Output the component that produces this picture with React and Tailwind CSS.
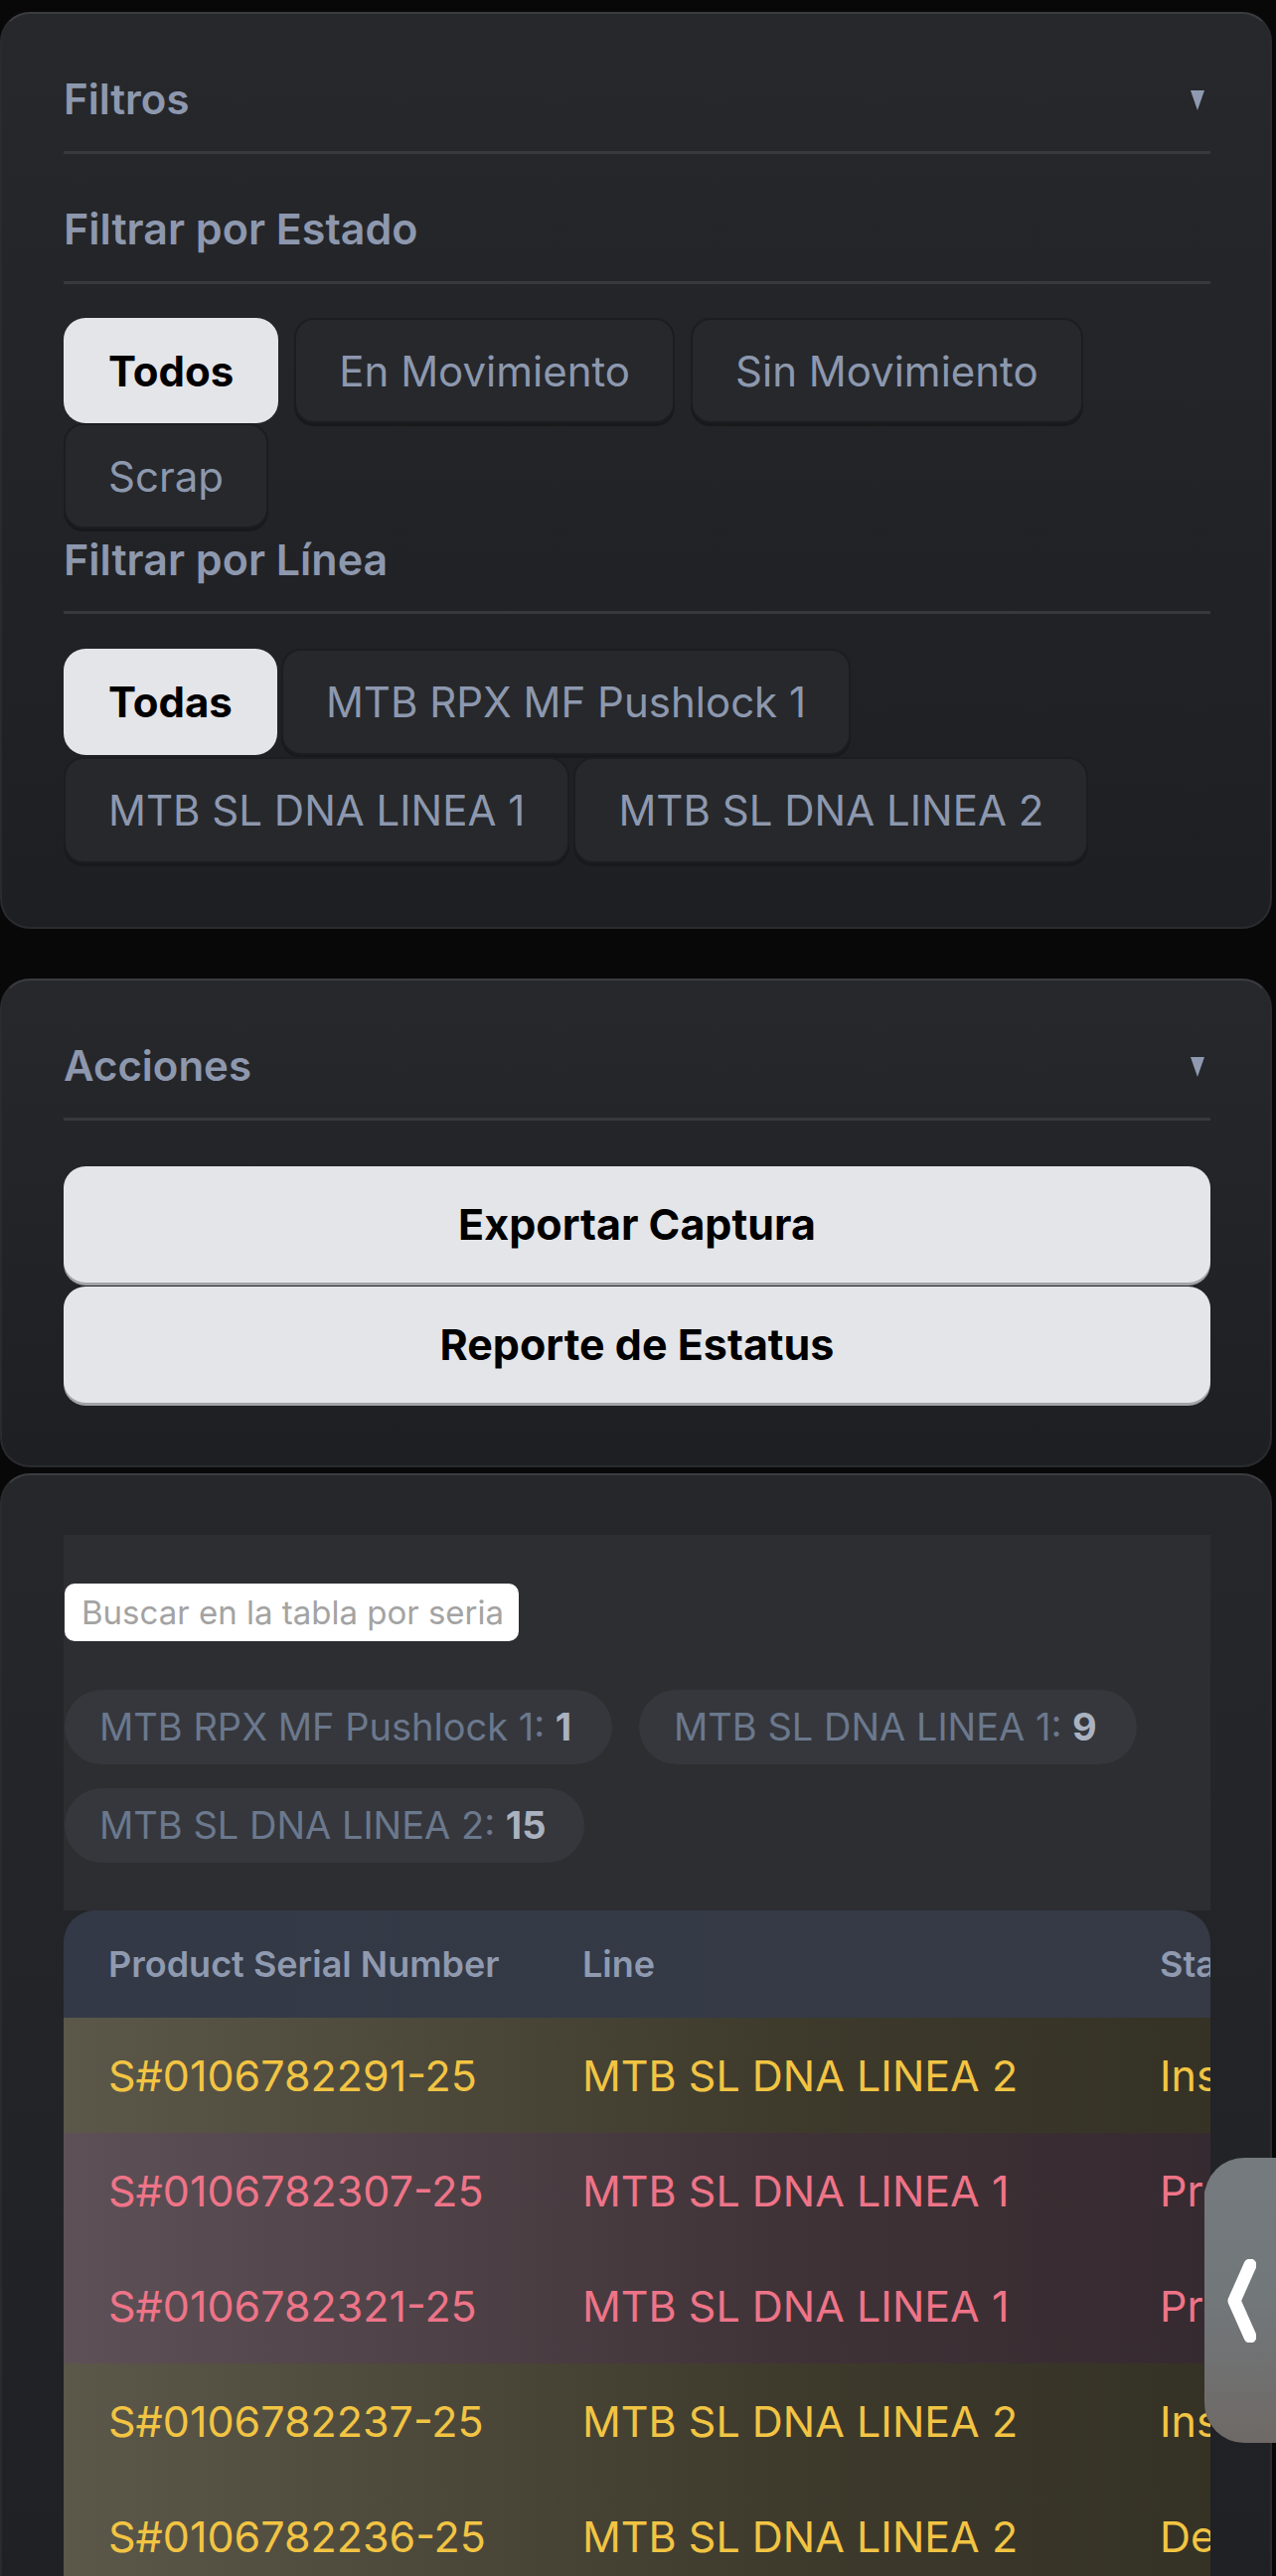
import React from "react";

const font = { fontFamily: "Inter, 'Noto Sans', sans-serif" };

function Triangle() {
  return (
    <svg width="14" height="20" viewBox="0 0 14 20">
      <polygon points="0,0 14,0 7,20" fill="#8f9ab0" />
    </svg>
  );
}

function Divider() {
  return <div className="h-[3px] bg-[#38393d]" />;
}

function Chip({ label, value, w }) {
  return (
    <div className="flex h-[75px] items-center rounded-full bg-[#35373c] px-[35px] text-[38px] text-[#6b788d]" style={{ width: w }}>
      <span className="whitespace-nowrap">
        {label}: <span className="font-bold text-[#aab2c0]">{value}</span>
      </span>
    </div>
  );
}

const rows = [
  { s: "S#0106782291-25", l: "MTB SL DNA LINEA 2", st: "Inspección", c: "y" },
  { s: "S#0106782307-25", l: "MTB SL DNA LINEA 1", st: "Proceso", c: "r" },
  { s: "S#0106782321-25", l: "MTB SL DNA LINEA 1", st: "Proceso", c: "r" },
  { s: "S#0106782237-25", l: "MTB SL DNA LINEA 2", st: "Inspección", c: "y" },
  { s: "S#0106782236-25", l: "MTB SL DNA LINEA 2", st: "Detenido", c: "y" },
  { s: "S#0106782240-25", l: "MTB SL DNA LINEA 2", st: "Inspección", c: "y" },
];

export default function App() {
  return (
    <div className="relative min-h-[2700px] bg-[#080809] pt-[12px]" style={font}>
      {/* Filtros card */}
      <div className="mr-[4px] rounded-[30px] border-2 border-[#2a2b2f] border-t-[#3b3c40] bg-gradient-to-b from-[#27282c] to-[#1e1f22] pb-[64px] pl-[62px] pr-[60px]">
        <div className="flex items-start justify-between pt-[56px] pb-[22px]">
          <span className="text-[42px] font-semibold leading-[60px] text-[#8d98ae]">Filtros</span>
          <span className="mr-[6px] mt-[21px]"><Triangle /></span>
        </div>
        <Divider />
        <div className="pt-[45px] pb-[23px] text-[43px] font-semibold leading-[60px] text-[#8d98ae]">Filtrar por Estado</div>
        <Divider />
        <div className="mt-[34px] flex flex-wrap gap-x-[16px]">
          <button className="h-[106px] rounded-[22px] bg-[#e4e5e9] px-[45px] text-[42px] font-bold text-black">Todos</button>
          <button className="h-[106px] rounded-[20px] border-2 border-[#1c1d20] bg-[#26282c] px-[43px] text-[42px] text-[#8d98ae] shadow-[0_3px_0_#18191b]">En Movimiento</button>
          <button className="h-[106px] rounded-[20px] border-2 border-[#1c1d20] bg-[#26282c] px-[43px] text-[42px] text-[#8d98ae] shadow-[0_3px_0_#18191b]">Sin Movimiento</button>
          <button className="h-[106px] rounded-[20px] border-2 border-[#1c1d20] bg-[#26282c] px-[43px] text-[42px] text-[#8d98ae] shadow-[0_3px_0_#18191b]">Scrap</button>
        </div>
        <div className="pt-[1px] pb-[22px] text-[43px] font-semibold leading-[60px] text-[#8d98ae]">Filtrar por Línea</div>
        <Divider />
        <div className="mt-[35px] flex flex-wrap gap-x-[4px] gap-y-[2px]">
          <button className="h-[107px] rounded-[22px] bg-[#e4e5e9] px-[45px] text-[42px] font-bold text-black">Todas</button>
          <button className="h-[107px] rounded-[20px] border-2 border-[#1c1d20] bg-[#26282c] px-[43px] text-[42px] text-[#8d98ae] shadow-[0_3px_0_#18191b]">MTB RPX MF Pushlock 1</button>
          <button className="h-[107px] rounded-[20px] border-2 border-[#1c1d20] bg-[#26282c] px-[43px] text-[42px] text-[#8d98ae] shadow-[0_3px_0_#18191b]">MTB SL DNA LINEA 1</button>
          <button className="h-[107px] rounded-[20px] border-2 border-[#1c1d20] bg-[#26282c] px-[43px] text-[42px] text-[#8d98ae] shadow-[0_3px_0_#18191b]">MTB SL DNA LINEA 2</button>
        </div>
      </div>

      {/* Acciones card */}
      <div className="mr-[4px] mt-[50px] rounded-[30px] border-2 border-[#2a2b2f] border-t-[#3b3c40] bg-gradient-to-b from-[#27282c] to-[#1e1f22] pb-[63px] pl-[62px] pr-[60px]">
        <div className="flex items-start justify-between pt-[56px] pb-[22px]">
          <span className="text-[42px] font-semibold leading-[60px] text-[#8d98ae]">Acciones</span>
          <span className="mr-[6px] mt-[21px]"><Triangle /></span>
        </div>
        <Divider />
        <div className="mt-[46px] flex flex-col gap-[4px]">
          <button className="h-[117px] w-full rounded-[22px] bg-[#e4e5e9] text-[43px] font-bold text-black shadow-[0_3px_0_#a2a3a6]">Exportar Captura</button>
          <button className="h-[117px] w-full rounded-[22px] bg-[#e4e5e9] text-[43px] font-bold text-black shadow-[0_3px_0_#a2a3a6]">Reporte de Estatus</button>
        </div>
      </div>

      {/* Table card */}
      <div className="mr-[4px] mt-[6px] rounded-t-[30px] border-2 border-b-0 border-[#2a2b2f] border-t-[#3b3c40] bg-gradient-to-b from-[#26272b] to-[#1f2023] pl-[62px] pr-[60px] pt-[60px]">
        <div className="bg-[#2d2e32] pb-[48px] pt-[49px]">
          <input
            className="ml-[1px] h-[58px] w-[457px] rounded-[10px] bg-white pl-[17px] text-[33px] text-black outline-none placeholder:text-[#a3a3a3]"
            placeholder="Buscar en la tabla por seria"
          />
          <div className="mt-[49px] flex flex-wrap gap-x-[27px] gap-y-[24px] pl-[1px]">
            <Chip label="MTB RPX MF Pushlock 1" value="1" w={551} />
            <Chip label="MTB SL DNA LINEA 1" value="9" w={501} />
            <Chip label="MTB SL DNA LINEA 2" value="15" w={523} />
          </div>
        </div>
        <div className="overflow-hidden rounded-t-[32px]">
          <div className="w-[1500px]">
            <div className="flex h-[108px] items-center bg-gradient-to-r from-[#333946] to-[#363a45] text-[36px] font-semibold text-[#8f9ab0]">
              <div className="w-[477px] pl-[45px]">Product Serial Number</div>
              <div className="w-[581px] pl-[45px]">Line</div>
              <div className="pl-[45px]">Status</div>
            </div>
            {rows.map((r, i) => (
              <div
                key={i}
                className={
                  r.c === "y"
                    ? "flex h-[116px] items-center bg-gradient-to-r from-[#5b584a] via-[#3d3a2c] to-[#2e2c20] text-[43px] text-[#f2c443]"
                    : "flex h-[116px] items-center bg-gradient-to-r from-[#5d5157] via-[#3f3237] to-[#2e242a] text-[43px] text-[#ee7488]"
                }
              >
                <div className="w-[477px] pl-[45px]">{r.s}</div>
                <div className="w-[581px] pl-[45px]">{r.l}</div>
                <div className="pl-[45px]">{r.st}</div>
              </div>
            ))}
          </div>
        </div>
      </div>

      {/* Side handle */}
      <div className="absolute right-0 top-[2172px] flex h-[287px] w-[72px] items-center rounded-l-[40px] bg-gradient-to-b from-[#747a7e] via-[#72777a] to-[#6e6966] pl-[22px]">
        <svg width="30" height="84" viewBox="0 0 30 84">
          <polyline points="24,6 8,42 24,78" fill="none" stroke="white" strokeWidth="13" strokeLinecap="round" strokeLinejoin="round" />
        </svg>
      </div>
    </div>
  );
}
